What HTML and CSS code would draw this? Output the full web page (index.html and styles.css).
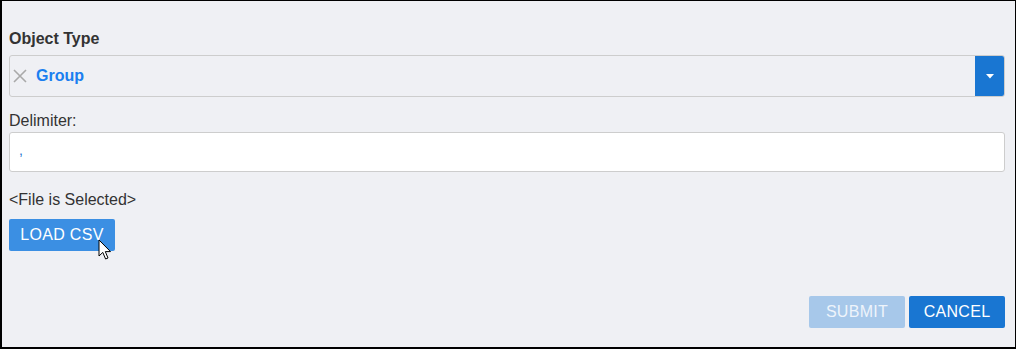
FILE: index.html
```html
<!DOCTYPE html>
<html>
<head>
<meta charset="utf-8">
<link rel="stylesheet" href="styles.css">
</head>
<body>
<div class="frame">
  <div class="field">
    <div class="label-bold">Object Type</div>
    <div class="select">
      <span class="clear">
        <svg width="14" height="14" viewBox="0 0 14 14"><path d="M1 1 L13 13 M13 1 L1 13" stroke="#a9a9a9" stroke-width="1.6" fill="none"/></svg>
      </span>
      <span class="value">Group</span>
      <span class="drop">
        <svg width="8" height="5" viewBox="0 0 8 5"><path d="M0 0 H8 L4 4.5 Z" fill="#fff"/></svg>
      </span>
    </div>
  </div>
  <div class="field">
    <div class="label">Delimiter:</div>
    <div class="input">,</div>
  </div>
  <div class="file">&lt;File is Selected&gt;</div>
  <div class="load-wrap">
    <button class="btn load">LOAD CSV</button>
    <svg class="cursor" width="14" height="22" viewBox="0 0 14 22"><path d="M1 1 L1 17 L4.8 13.4 L7.6 20 L10 19 L7.3 12.6 L12.5 12.6 Z" fill="#fff" stroke="#000" stroke-width="1" stroke-linejoin="miter"/></svg>
  </div>
  <div class="actions">
    <button class="btn submit">SUBMIT</button>
    <button class="btn cancel">CANCEL</button>
  </div>
</div>
</body>
</html>
```
FILE: styles.css
```css
html, body {
  margin: 0;
  padding: 0;
}
body {
  width: 1016px;
  height: 349px;
  font-family: "Liberation Sans", Arial, sans-serif;
  color: #333;
}
.frame {
  box-sizing: border-box;
  width: 1016px;
  height: 349px;
  border-style: solid;
  border-color: #000;
  border-width: 1px 1px 2px 2px;
  background: #eff0f4;
  padding: 29px 10px 0 7px;
  display: flex;
  flex-direction: column;
}
.field {
  display: flex;
  flex-direction: column;
}
.label-bold {
  font-size: 16px;
  font-weight: bold;
  line-height: 18px;
  margin-bottom: 7px;
}
.label {
  font-size: 16px;
  line-height: 18px;
  margin-bottom: 2px;
}
.select {
  box-sizing: border-box;
  height: 42px;
  border: 1px solid #cdcdcd;
  border-radius: 3px;
  display: flex;
  align-items: center;
  margin-bottom: 15px;
}
.clear {
  display: flex;
  margin-left: 3px;
  margin-right: 9px;
}
.value {
  color: #1b7ff0;
  font-weight: bold;
  font-size: 16px;
  flex: 1;
}
.drop {
  width: 29px;
  align-self: stretch;
  background: #1976d2;
  display: flex;
  align-items: center;
  justify-content: center;
  border-radius: 0 2px 2px 0;
}
.input {
  box-sizing: border-box;
  height: 40px;
  background: #fff;
  border: 1px solid #cdcdcd;
  border-radius: 3px;
  color: #1a73d0;
  font-size: 14px;
  padding: 9px 0 0 9px;
  margin-bottom: 19px;
}
.file {
  font-size: 16px;
  line-height: 18px;
  margin-bottom: 10px;
}
.load-wrap {
  position: relative;
  display: flex;
}
.btn {
  font-family: "Liberation Sans", Arial, sans-serif;
  font-size: 16px;
  letter-spacing: 0.3px;
  border: none;
  border-radius: 2px;
  height: 32px;
  color: #fff;
  padding: 0;
  cursor: default;
}
.load {
  width: 106px;
  background: #3b8fe3;
}
.cursor {
  position: absolute;
  left: 89px;
  top: 20px;
}
.actions {
  margin-top: 45px;
  display: flex;
  justify-content: flex-end;
  gap: 4px;
}
.submit {
  width: 96px;
  background: #a7c8ea;
  color: #eef4fb;
}
.cancel {
  width: 96px;
  background: #1976d2;
}
```
